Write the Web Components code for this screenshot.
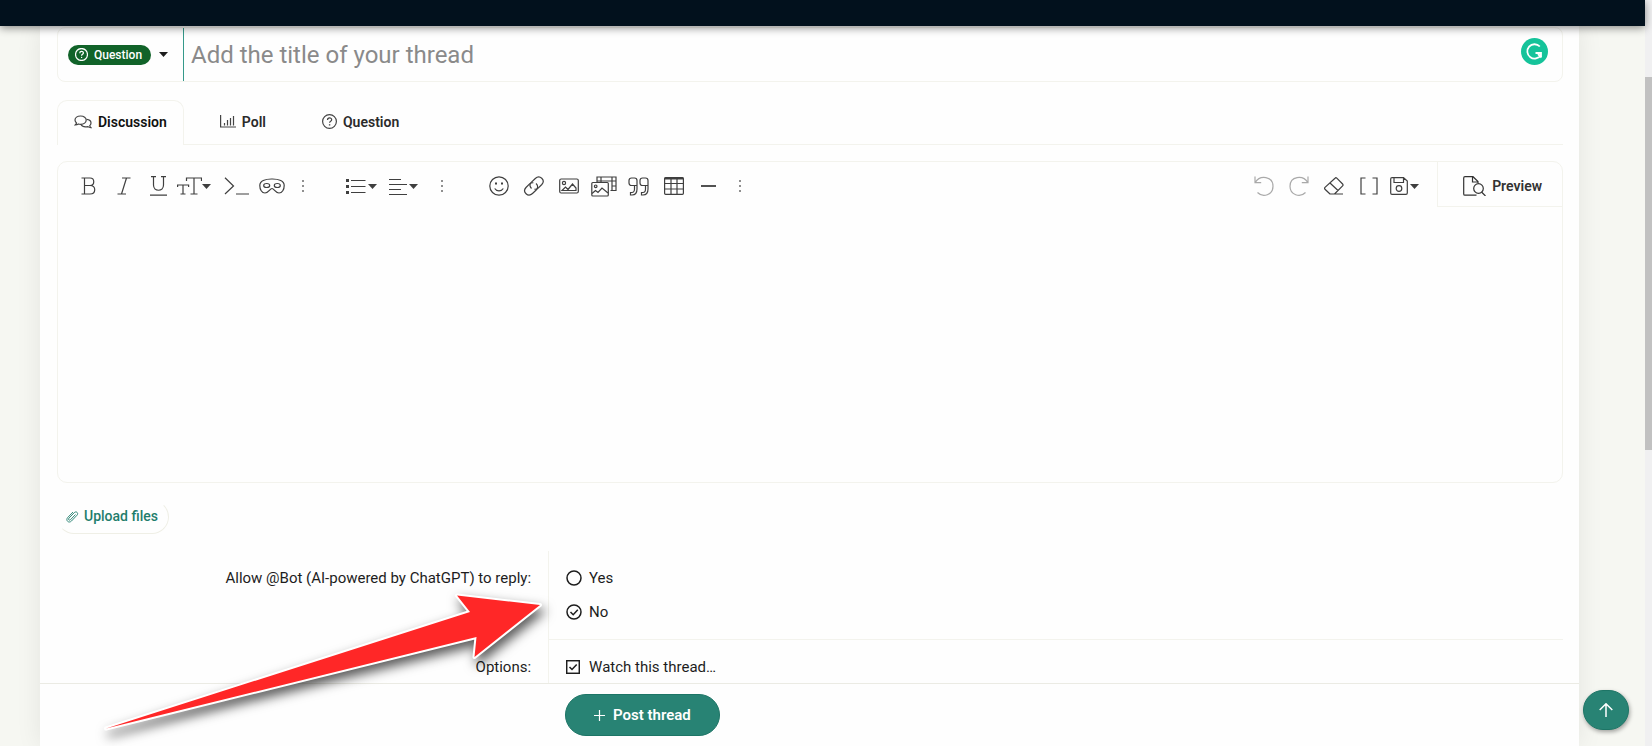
<!DOCTYPE html>
<html lang="en">
<head>
<meta charset="utf-8">
<title>Post thread</title>
<style>
    body {
        margin: 0;
        font: 15px/24px Roboto, "Liberation Sans", sans-serif;
        color: #1d1d1d;
        background: #f6f7f2;
        --line: #f3f3ed;
        --accent: #288374;
    }
</style>
</head>
<body>
<thread-page>
    <thread-card>
        <title-field></title-field>
        <tab-list>
            <tab-item icon="comments" active>Discussion</tab-item>
            <tab-item icon="chart">Poll</tab-item>
            <tab-item icon="question">Question</tab-item>
        </tab-list>
        <post-editor></post-editor>
        <upload-button>Upload files</upload-button>
        <form-row label="Allow @Bot (AI-powered by ChatGPT) to reply:">
            <choice-option type="radio" name="bot">Yes</choice-option>
            <choice-option type="radio" name="bot" checked>No</choice-option>
        </form-row>
        <form-row label="Options:">
            <choice-option type="checkbox" name="watch" checked>Watch this thread…</choice-option>
        </form-row>
        <submit-button slot="footer">Post thread</submit-button>
    </thread-card>
</thread-page>
<pointer-arrow></pointer-arrow>
<scroll-top></scroll-top>

<script>
// name: [width, height, markup]
const ICONS = {
    caret: [9, 5, '<path d="M0 0h9L4.500 5z" fill="currentColor" stroke="none"/>'],
    question: [15, 15, '<circle cx="7.500" cy="7.500" r="6.900"/><path d="M5.500 6c0-2.700 4.200-2.700 4.200-.2 0 1.500-2.100 1.500-2.100 3"/><path d="M7.600 10.200v1.300" stroke-width="1.400"/>'],
    comments: [18, 14, '<path d="M6.600 1C3.300 1 1 2.900 1 5.100c0 1.100.6 2.100 1.500 2.900-.2.800-.7 1.500-1.300 2 1.300 0 2.400-.4 3.200-1 .7.200 1.400.3 2.200.3 3.300 0 5.600-1.900 5.600-4.200S9.900 1 6.600 1z"/><path d="M12.600 4.300c2.600.2 4.400 1.800 4.400 3.700 0 1-.5 1.900-1.300 2.600.2.800.6 1.500 1.200 2-1.200 0-2.200-.4-2.900-1-3 .7-6-.2-7-2.100"/>'],
    chart: [16, 13, '<path d="M.6 0v12H16M4.500 8v2.500M7.500 5v5.500M10.500 3v7.500M13.500 1v9.500"/>'],
    bold: [15, 18, '<path d="M.5 1H9c5 0 5 7.500 0 7.500H3.500M9 8.500c6.300 0 6.300 8.500 0 8.500H.5M3.500 1v16"/>'],
    italic: [14, 18, '<path d="M5 1h8.500M.5 17H9M9.500 1l-5 16"/>'],
    underline: [17, 20, '<path d="M1 .7h5M11 .7h5M3.500.7V9c0 7 10 7 10 0V.7M0 19.200h17"/>'],
    size: [25, 18, '<path d="M9.500 4V1h15v3M17 1v16M13.500 17h7M.6 10V8h11v2M6 8v9M3.500 17h5"/>'],
    code: [25, 18, '<path d="M1 .8 9.500 9 1 17M12 17h13"/>'],
    mask: [26, 16, '<path d="M13 1C6 .9.8 3 .8 7.500c0 4 2 7.500 5.200 7.500 3.600 0 4.800-4.500 7-4.500s3.400 4.500 7 4.500c3.200 0 5.200-3.500 5.200-7.500C25.200 3 20 .9 13 1z"/><ellipse cx="7.700" cy="7.500" rx="3" ry="2"/><ellipse cx="18.300" cy="7.500" rx="3" ry="2"/>'],
    more: [4, 14, '<path d="M1 2h2M1 7h2M1 12h2" stroke-width="2" stroke="#909090"/>'],
    list: [20, 17, '<path d="M5 2.500h14.500M5 8.500h14.500M5 14.500h14.500"/><path d="M0 2.500h3M0 8.500h3M0 14.500h3" stroke-width="3"/>'],
    align: [18, 17, '<path d="M0 1.500h12M0 6.500h18M0 11.500h12M0 16.500h18"/>'],
    smile: [20, 20, '<circle cx="10" cy="10" r="9.200"/><path d="M5.700 12.500c2 3.200 6.600 3.200 8.600 0"/><path d="M6 7.500h2M12 7.500h2" stroke-width="2"/>'],
    link: [22, 20, '<path d="M8.500 12.500c-2-2-1.700-4.600 0-6.300l3.800-3.700c4.500-4.200 10.500 1.500 6.500 6l-3.600 3.600c-1.200 1.100-2.400 1.400-3.700 1"/><path d="M13 7.500c2.300 2 2 4.700.2 6.500l-3.700 3.500c-4.500 4.200-10.500-1.500-6.500-6l3.600-3.600c1.200-1.100 2.400-1.400 3.700-1"/>'],
    image: [20, 16, '<rect x=".7" y="1" width="18.600" height="14" rx="1.500"/><circle cx="5" cy="5" r="1.600"/><path d="M3 12.500 6.500 9 9 11.500l4.500-5.500 3.500 4v2.500z"/>'],
    gallery: [26, 21, '<rect x=".8" y="6.500" width="16.500" height="13.500" rx="1"/><circle cx="4.700" cy="10.300" r="1.300"/><path d="m1 17.500 3.500-3 2.500 2 4-4.500 6 5"/><path d="M6 6V1h19v13.500h-5.500M10 1v5M21 1v13.500M6 5h15M21 5h4M21 10h4"/>'],
    quote: [21, 19, '<path d="M9 8.500H3.500c-1.500 0-2.500-1-2.500-2.500V3.500C1 2 2 1 3.500 1h3C8 1 9 2 9 3.500V12c0 3.800-2 6-5 6H2.500v-2.500H4c1.500 0 2.500-1.500 2.500-3.500V8.500"/><path d="M20 8.500h-5.500c-1.500 0-2.500-1-2.500-2.500V3.500C12 2 13 1 14.500 1h3C19 1 20 2 20 3.500V12c0 3.800-2 6-5 6h-1.500v-2.500H15c1.500 0 2.500-1.500 2.500-3.500V8.500"/>'],
    table: [20, 18, '<rect x=".6" y=".7" width="18.800" height="16.600" rx="1"/><path d="M.6 1.500h18.800" stroke-width="2"/><path d="M.6 6.500h18.800M.6 12h18.800M7 1v16M13 1v16"/>'],
    rule: [15, 4, '<path d="M0 2h15" stroke-width="1.800"/>'],
    undo: [20, 20, '<path d="M1 .5v6.200h6.200M1.200 6.500C6-1.500 19 0 19 10.300 19 19 9 22 3.500 16.500"/>'],
    redo: [20, 20, '<path d="M19 .5v6.200h-6.200M18.800 6.500C14-1.500 1 0 1 10.300 1 19 11 22 16.500 16.500"/>'],
    eraser: [20, 18, '<path d="M6 17 1 12.200c-.6-.6-.6-1.200 0-1.800L11 1.200c.6-.6 1.200-.6 1.800 0L18.600 7c.6.6.6 1.200 0 1.800L10.500 17M5.500 17H19M6 6l8 7.500"/>'],
    brackets: [18, 18, '<path d="M5.500 1H1v16h4.500M12.500 1H17v16h-4.500"/>'],
    save: [18, 18, '<path d="M2 .7h11.500L17.300 4v12c0 .8-.4 1.300-1.300 1.300H2c-.9 0-1.300-.5-1.300-1.300V2c0-.9.400-1.300 1.300-1.300zM4 .7V5.500h9.500V.7"/><circle cx="9" cy="11.500" r="2.800"/>'],
    preview: [23, 20, '<path d="M13.500 19.200H2c-.8 0-1.300-.5-1.300-1.300V2c0-.8.500-1.300 1.300-1.300h8L15 5.500V7M9.500.7V6H15M18.500 16l4 4"/><circle cx="15.500" cy="12.500" r="4.800"/>'],
    clip: [13, 13, '<path d="m9.500 4.500-5 5.200c-1.200 1.200-2.700-.2-1.600-1.500l5.400-5.600c1.900-1.900 4.600.5 2.700 2.600L5.500 11c-2.700 2.700-6.300-.6-3.800-3.500L7 2" stroke-width=".9"/>'],
    plus: [11, 11, '<path d="M5.500 0v11M0 5.500h11"/>'],
    up: [14, 14, '<path d="M7 14V1M.7 7 7 .8 13.300 7"/>'],
    radio: [16, 16, '<circle cx="8" cy="8" r="7"/><path class="tick" d="m4.500 8 2.700 2.700 4.600-4.900"/>'],
    checkbox: [14, 14, '<rect x=".7" y=".7" width="12.600" height="12.600"/><path class="tick" d="m3.500 7 2.500 2.500 4.700-5"/>'],
    grammar: [27, 27, '<circle cx="13.500" cy="13.500" r="13.500" fill="#15c39a" stroke="none"/><path d="M18.800 8.500A7.200 7.200 0 1 0 19.800 17M14.500 15h5.500M20 14v5.500M20.500 19.500l-3.500-3.500" stroke="#fff" stroke-width="1.800"/>']
};

function icon(name) {
    const [w, h, body] = ICONS[name];
    return `<svg width="${w}" height="${h}" viewBox="0 0 ${w} ${h}" fill="none" stroke="currentColor" stroke-width="1.200" aria-hidden="true">${body}</svg>`;
}

const BASE = `
    * { box-sizing: border-box; }
    button, input, select, textarea { font: inherit; color: inherit; border: 0; background: none; margin: 0; padding: 0; outline: 0; }
    button { cursor: pointer; }
    svg { display: block; flex: none; }
`;

class BaseElement extends HTMLElement {
    connectedCallback() {
        this.attachShadow({mode: 'open'});
        this.shadowRoot.innerHTML = `<style>:host { display: block; box-sizing: border-box; } ${BASE}</style>` + this.render();
    }
}

class ThreadPage extends BaseElement {
    render() {
        return `
        <style>
            :host { display: flex; height: 100vh; overflow: hidden; }
            .content { flex: 1; display: flex; flex-direction: column; min-width: 0; }
            header { position: relative; z-index: 1; flex: none; height: 26px; background: #02111d; box-shadow: 0 2px 8px rgba(0, 0, 0, .45); }
            main { flex: 1; display: flex; min-height: 0; padding: 0 66px 0 40px; }
            ::slotted(*) { flex: 1; min-width: 0; }
            .track { width: 7px; display: grid; grid-template-rows: 77fr 373fr 296fr; background: #f0f0f1; }
            .thumb { grid-row: 2; background: #c1c1c1; }
        </style>
        <div class="content">
            <header></header>
            <main><slot></slot></main>
        </div>
        <div class="track"><div class="thumb"></div></div>
        `;
    }
}

class ThreadCard extends BaseElement {
    render() {
        return `
        <style>
            :host { display: flex; flex-direction: column; background: #fefefe; box-shadow: 0 0 24px rgba(0, 0, 0, .08); }
            .body { flex: 1; min-height: 0; overflow: hidden; padding: 1px 16px 0 17px; }
            footer { flex: none; display: grid; grid-template-columns: 15fr 31fr; padding: 10px 16px 10px 17px; border-top: 1px solid #ebebe4; }
            ::slotted([slot=footer]) { grid-column: 2; margin-left: 17px; }
        </style>
        <div class="body"><slot></slot></div>
        <footer><slot name="footer"></slot></footer>
        `;
    }
}

class TitleField extends BaseElement {
    render() {
        return `
        <style>
            :host { display: flex; align-items: stretch; height: 55px; border: 1px solid var(--line); border-radius: 8px; }
            .prefix { display: flex; align-items: center; gap: 8px; width: 125px; padding-left: 10px; }
            .badge { display: flex; align-items: center; gap: 6px; height: 20px; padding: 0 8px 0 7px; border-radius: 10px; background: #116329; color: #fff; }
            .badge svg { width: 13px; height: 13px; stroke-width: 1.4; }
            select { appearance: none; font-size: 12px; font-weight: 500; line-height: 20px; }
            input { flex: 1; min-width: 0; padding-left: 7px; border-left: 1px solid #35998a; font-size: 24px; font-weight: 400; }
            input::placeholder { color: #8a8a8a; opacity: 1; }
            .helper { align-self: center; margin: 0 14px 6px 0; }
        </style>
        <label class="prefix">
            <span class="badge">${icon('question')}<select aria-label="Prefix"><option>Question</option></select></span>
            ${icon('caret')}
        </label>
        <input type="text" aria-label="Title" placeholder="Add the title of your thread">
        <button class="helper" type="button" aria-label="Check grammar">${icon('grammar')}</button>
        `;
    }
}

class TabList extends BaseElement {
    render() {
        return `
        <style>
            :host { display: flex; height: 45px; margin-top: 18px; }
            .rest { flex: 1; border-bottom: 1px solid var(--line); }
        </style>
        <slot></slot>
        <div class="rest"></div>
        `;
    }
}

class TabItem extends BaseElement {
    render() {
        return `
        <style>
            button { display: flex; align-items: center; gap: 6px; height: 45px; font-size: 14px; font-weight: 600; }
            :host(:not([active])) button { padding: 0 20px 1px 36px; border-bottom: 1px solid var(--line); color: #2b2b2b; }
            :host([active]) button { padding: 0 16px 3px; border: 1px solid var(--line); border-bottom: 0; border-radius: 10px 10px 0 0; color: #111; }
            svg { color: #444; }
        </style>
        <button type="button" role="tab" aria-selected="${this.hasAttribute('active')}">${icon(this.getAttribute('icon'))}<slot></slot></button>
        `;
    }
}

class ToolButton extends BaseElement {
    render() {
        const label = this.getAttribute('icon');
        return `
        <style>
            :host { flex: none; }
            button { display: flex; align-items: center; justify-content: center; width: 35px; height: 44px; padding-top: 4px; color: #3f3f3f; }
            :host([icon=more]) button { width: 28px; }
            :host([menu]) button { justify-content: flex-start; gap: 2px; width: 43px; padding-left: 4px; }
            :host([icon=size]) button { gap: 0; padding-left: 1px; }
            :host([disabled]) button { color: #a9a9a9; }
        </style>
        <button type="button" aria-label="${label}" ${this.hasAttribute('disabled') ? 'disabled' : ''}>
            ${icon(label)}${this.hasAttribute('menu') ? icon('caret') : ''}
        </button>
        `;
    }
}

class PostEditor extends BaseElement {
    render() {
        const tools = names => names.split(' ').map(n => {
            const [name, flag = ''] = n.split(':');
            return `<tool-button icon="${name}" ${flag}></tool-button>`;
        }).join('');
        return `
        <style>
            :host { height: 322px; margin-top: 16px; border: 1px solid var(--line); border-radius: 10px; display: flex; flex-direction: column; }
            .toolbar { display: flex; gap: 25px; padding-left: 13px; }
            .group { display: flex; }
            .end { display: flex; gap: 8px; margin-left: auto; }
            .preview { display: flex; align-items: center; gap: 6px; height: 45px; padding: 3px 20px 0 25px; border: solid var(--line); border-width: 0 0 1px 1px; font-size: 14px; font-weight: 600; color: #333; }
            textarea { flex: 1; resize: none; padding: 12px 20px; }
        </style>
        <div class="toolbar">
            <div class="group">${tools('bold italic underline size:menu code mask more')}</div>
            <div class="group">${tools('list:menu align:menu more')}</div>
            <div class="group">${tools('smile link image gallery quote table rule more')}</div>
            <div class="end">
                <div class="group">${tools('undo:disabled redo:disabled eraser brackets save:menu')}</div>
                <button class="preview" type="button">${icon('preview')}Preview</button>
            </div>
        </div>
        <textarea aria-label="Message"></textarea>
        `;
    }
}

class UploadButton extends BaseElement {
    render() {
        return `
        <style>
            :host { margin: 17px 0; }
            button { display: flex; align-items: center; gap: 5px; height: 34px; padding: 0 10px 2px 8px; border: 1px solid #efefe6; border-color: transparent #efefe6 #efefe6 transparent; border-radius: 17px; color: #1f7d6c; font-size: 14px; font-weight: 500; }
        </style>
        <button type="button">${icon('clip')}<slot></slot></button>
        `;
    }
}

class FormRow extends BaseElement {
    render() {
        return `
        <style>
            :host { display: grid; grid-template-columns: 15fr 31fr; }
            .label { padding: 15px 17px 0 0; text-align: right; }
            .options { display: flex; flex-direction: column; gap: 10px; padding: 15px 0 15px 17px; border: solid var(--line); border-width: 0 0 1px 1px; }
        </style>
        <div class="label" id="label">${this.getAttribute('label')}</div>
        <div class="options" role="group" aria-labelledby="label"><slot></slot></div>
        `;
    }
}

class ChoiceOption extends BaseElement {
    render() {
        const type = this.getAttribute('type');
        return `
        <style>
            :host { display: flex; }
            label { display: grid; grid-template-columns: 16px auto; column-gap: 7px; align-items: center; }
            input { appearance: none; grid-area: 1 / 1; width: 16px; height: 16px; }
            svg { grid-area: 1 / 1; pointer-events: none; stroke-width: 1.5; }
            input:not(:checked) + svg .tick { display: none; }
        </style>
        <label>
            <input type="${type}" name="${this.getAttribute('name')}" ${this.hasAttribute('checked') ? 'checked' : ''}>
            ${icon(type)}
            <span><slot></slot></span>
        </label>
        `;
    }
}

class SubmitButton extends BaseElement {
    render() {
        return `
        <style>
            button { display: flex; align-items: center; gap: 8px; height: 42px; padding: 0 28px; border: 1px solid #1d7566; border-radius: 21px; background: var(--accent); color: #fff; font-weight: 600; }
        </style>
        <button type="submit">${icon('plus')}<slot></slot></button>
        `;
    }
}

class ScrollTop extends BaseElement {
    render() {
        return `
        <style>
            :host { position: fixed; right: 23px; bottom: 16px; }
            button { display: flex; align-items: center; justify-content: center; width: 46px; height: 40px; border: 1px solid #1d7566; border-radius: 20px; background: var(--accent); color: #fff; box-shadow: 1px 2px 4px rgba(0, 0, 0, .35); }
            svg { stroke-width: 1.5; }
        </style>
        <button type="button" aria-label="Top">${icon('up')}</button>
        `;
    }
}

class PointerArrow extends BaseElement {
    render() {
        return `
        <style>
            :host { position: absolute; left: 90px; top: 580px; pointer-events: none; }
            svg { overflow: visible; filter: drop-shadow(3px 6px 6px rgba(0, 0, 0, .65)); }
            path { paint-order: stroke; stroke-linejoin: round; }
        </style>
        <svg width="460" height="160" viewBox="90 580 460 160" aria-hidden="true">
            <path d="M106 728.500 470 612 457 595.500l83 9.500-65.500 52 2-20z" fill="#ff2727" stroke="#fff" stroke-width="4"/>
        </svg>
        `;
    }
}

customElements.define('thread-page', ThreadPage);
customElements.define('thread-card', ThreadCard);
customElements.define('title-field', TitleField);
customElements.define('tab-list', TabList);
customElements.define('tab-item', TabItem);
customElements.define('tool-button', ToolButton);
customElements.define('post-editor', PostEditor);
customElements.define('upload-button', UploadButton);
customElements.define('form-row', FormRow);
customElements.define('choice-option', ChoiceOption);
customElements.define('submit-button', SubmitButton);
customElements.define('scroll-top', ScrollTop);
customElements.define('pointer-arrow', PointerArrow);
</script>
</body>
</html>
